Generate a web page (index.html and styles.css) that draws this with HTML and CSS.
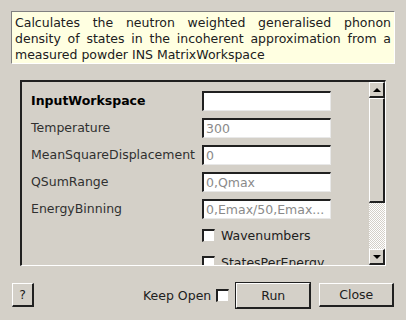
FILE: index.html
```html
<html>
<head>
<title>ComputeDOS</title>
<link rel="stylesheet" href="styles.css">
</head>
<body>
<div class="desc">
    Calculates the neutron weighted generalised phonon density of states in the incoherent approximation from a measured powder INS MatrixWorkspace
</div>

<div class="panel">
    <div class="props">
	<div class="row">
	    <span class="label bold">InputWorkspace</span>
	    <span class="field"></span>
	</div>
	<div class="row">
	    <span class="label">Temperature</span>
	    <span class="field">300</span>
	</div>
	<div class="row">
	    <span class="label">MeanSquareDisplacement</span>
	    <span class="field">0</span>
	</div>
	<div class="row">
	    <span class="label">QSumRange</span>
	    <span class="field">0,Qmax</span>
	</div>
	<div class="row">
	    <span class="label">EnergyBinning</span>
	    <span class="field">0,Emax/50,Emax...</span>
	</div>
	<div class="row check_row">
	    <span class="box"></span>
	    <span>Wavenumbers</span>
	</div>
	<div class="row check_row">
	    <span class="box"></span>
	    <span>StatesPerEnergy</span>
	</div>
    </div>
    <div class="scrollbar">
	<div class="sb_btn"><span class="arrow_up"></span></div>
	<div class="sb_thumb"></div>
	<div class="sb_track"></div>
	<div class="sb_btn"><span class="arrow_down"></span></div>
    </div>
</div>

<div class="footer">
    <div class="btn help_btn">?</div>
    <div class="keep_open">
	<span>Keep Open</span>
	<span class="box"></span>
    </div>
    <div class="btn run_btn">Run</div>
    <div class="btn close_btn">Close</div>
</div>
</body>
</html>
```
FILE: styles.css
```css
body {
    font-family: "DejaVu Sans", sans-serif;
    font-size: 12px;
    color: #000000;
    background-color: #D4D0C8;
    margin: 0;
    width: 406px;
    height: 320px;
    overflow: hidden;
}

.desc {
    margin: 11px 0 0 11px;
    width: 376px;
    height: 45px;
    padding: 3px 3px 3px 3px;
    background-color: #FFFFE1;
    border-top: 1px solid #808080;
    border-left: 1px solid #808080;
    border-bottom: 1px solid #FFFFFF;
    border-right: 1px solid #FFFFFF;
    text-align: justify;
    line-height: 16px;
    font-size: 12.5px;
    color: #202020;
}

.panel {
    margin: 16px 0 0 20px;
    width: 363px;
    height: 183px;
    border-top: 2px solid #202020;
    border-left: 2px solid #202020;
    border-bottom: 1px solid #FFFFFF;
    border-right: 1px solid #FFFFFF;
    display: flex;
    overflow: hidden;
}

.props {
    flex: 1;
    padding: 5px 0 0 9px;
    overflow: hidden;
}

.row {
    height: 27px;
    display: flex;
    align-items: center;
    color: #303030;
    font-size: 12.5px;
}
.label {
    width: 171px;
    white-space: nowrap;
}
.bold {
    font-weight: 700;
    color: #000000;
}
.field {
    box-sizing: border-box;
    width: 129px;
    height: 20px;
    background-color: #FFFFFF;
    border-top: 2px solid #202020;
    border-left: 2px solid #202020;
    border-bottom: 1px solid #E8E8E8;
    border-right: 1px solid #E8E8E8;
    box-shadow: 0 0 0 1px #D4D0C8;
    padding: 1px 0 0 2px;
    color: #8A8A8A;
    line-height: 16px;
    white-space: nowrap;
}
.check_row {
    padding-left: 171px;
    gap: 6px;
    color: #202020;
}

.box {
    display: inline-block;
    box-sizing: border-box;
    width: 13px;
    height: 13px;
    background-color: #FFFFFF;
    border-top: 2px solid #202020;
    border-left: 2px solid #202020;
    border-bottom: 1px solid #D4D0C8;
    border-right: 1px solid #D4D0C8;
}

.scrollbar {
    width: 16px;
    display: flex;
    flex-direction: column;
}
.sb_btn, .sb_thumb {
    box-sizing: border-box;
    background-color: #D4D0C8;
    border-top: 1px solid #FFFFFF;
    border-left: 1px solid #FFFFFF;
    border-bottom: 2px solid #202020;
    border-right: 2px solid #202020;
}
.sb_btn {
    height: 16px;
    display: flex;
    align-items: center;
    justify-content: center;
}
.sb_thumb {
    height: 105px;
}
.sb_track {
    flex: 1;
    background: repeating-conic-gradient(#FFFFFF 0 25%, #D4D0C8 0 50%) 0 0 / 2px 2px;
}
.arrow_up {
    width: 0;
    height: 0;
    border-left: 4px solid transparent;
    border-right: 4px solid transparent;
    border-bottom: 4px solid #000000;
}
.arrow_down {
    width: 0;
    height: 0;
    border-left: 4px solid transparent;
    border-right: 4px solid transparent;
    border-top: 4px solid #000000;
}

.footer {
    margin-top: 16px;
    display: flex;
    align-items: center;
    height: 26px;
    padding-left: 12px;
}
.btn {
    box-sizing: border-box;
    height: 24px;
    display: flex;
    align-items: center;
    justify-content: center;
    background-color: #D4D0C8;
    border-top: 1px solid #FFFFFF;
    border-left: 1px solid #FFFFFF;
    border-bottom: 2px solid #202020;
    border-right: 2px solid #202020;
    font-size: 12.5px;
    color: #202020;
}
.help_btn {
    width: 22px;
}
.keep_open {
    margin-left: 109px;
    display: flex;
    align-items: center;
    gap: 5px;
    color: #202020;
    font-size: 12.5px;
}
.run_btn {
    margin-left: 6px;
    width: 76px;
    height: 27px;
    outline: 1px solid #202020;
    outline-offset: -1px;
    border-top: 2px solid #FFFFFF;
    border-left: 2px solid #FFFFFF;
    border-bottom: 2px solid #202020;
    border-right: 2px solid #202020;
}
.close_btn {
    margin-left: 8px;
    width: 75px;
}
```
